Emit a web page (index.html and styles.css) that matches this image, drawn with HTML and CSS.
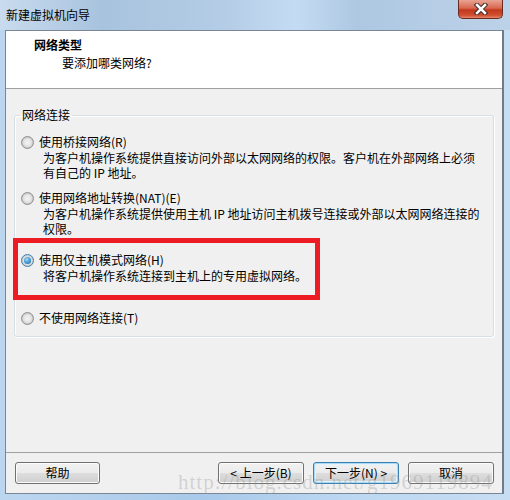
FILE: index.html
```html
<!DOCTYPE html>
<html lang="zh">
<head>
<meta charset="utf-8">
<title>新建虚拟机向导</title>
<link rel="stylesheet" href="styles.css">
</head>
<body>
<div class="window">
  <div class="titlebar">
    <span class="title">新建虚拟机向导</span>
    <div class="close">
      <svg width="20" height="12" viewBox="0 0 20 12">
        <path d="M6 2 L14 10 M14 2 L6 10" stroke="#3a2a2a" stroke-width="4.5" stroke-linecap="square"/>
        <path d="M6 2 L14 10 M14 2 L6 10" stroke="#ffffff" stroke-width="2.5" stroke-linecap="square"/>
      </svg>
    </div>
  </div>
  <div class="client">
    <div class="header">
      <div class="h-title">网络类型</div>
      <div class="h-sub">要添加哪类网络?</div>
    </div>
    <div class="body">
      <fieldset class="group">
        <legend>网络连接</legend>
        <div class="opt opt1">
          <div class="opt-title"><span class="radio"></span><span>使用桥接网络(R)</span></div>
          <div class="desc">为客户机操作系统提供直接访问外部以太网网络的权限。客户机在外部网络上必须<br>有自己的 IP 地址。</div>
        </div>
        <div class="opt opt2">
          <div class="opt-title"><span class="radio"></span><span>使用网络地址转换(NAT)(E)</span></div>
          <div class="desc">为客户机操作系统提供使用主机 IP 地址访问主机拨号连接或外部以太网网络连接的<br>权限。</div>
        </div>
        <div class="opt opt3">
          <div class="opt-title"><span class="radio checked"></span><span>使用仅主机模式网络(H)</span></div>
          <div class="desc">将客户机操作系统连接到主机上的专用虚拟网络。</div>
        </div>
        <div class="opt opt4">
          <div class="opt-title"><span class="radio"></span><span>不使用网络连接(T)</span></div>
        </div>
      </fieldset>
    </div>
    <div class="footer">
      <button class="btn help">帮助</button>
      <div class="spacer"></div>
      <button class="btn">&lt; 上一步(B)</button>
      <button class="btn default">下一步(N) &gt;</button>
      <button class="btn">取消</button>
    </div>
  </div>
  <div class="watermark">http://blog.csdn.net/g1969119894</div>
</div>
</body>
</html>
```
FILE: styles.css
```css
html, body {
  margin: 0;
  padding: 0;
}
body {
  width: 510px;
  height: 500px;
  overflow: hidden;
  font-family: "Noto Sans CJK SC", "Liberation Sans", sans-serif;
  font-size: 12px;
  color: #000;
}
.window {
  position: relative;
  width: 510px;
  height: 500px;
  background: linear-gradient(90deg, #bcd6ef 0%, #a9c9ea 40%, #bcd8f2 70%, #c7ddf2 100%);
  overflow: hidden;
}
.titlebar {
  height: 30px;
  display: flex;
  align-items: flex-start;
  background: linear-gradient(90deg, #c9dbee 0%, #a8c3de 20%, #b5cde6 45%, #c4dcf3 58%, #aec8e2 70%, #bcd2e8 100%);
}
.title {
  margin-left: 6px;
  line-height: 30px;
  color: #000;
}
.close {
  margin-left: auto;
  margin-right: 7px;
  width: 45px;
  height: 19px;
  box-sizing: border-box;
  border: 1px solid #6b2a22;
  border-top: none;
  border-radius: 0 0 5px 5px;
  background: linear-gradient(180deg, #e8a493 0%, #d9674f 45%, #c2381c 55%, #d0502f 85%, #e48a6e 100%);
  display: flex;
  align-items: center;
  justify-content: center;
}
.client {
  margin-left: 5px;
  width: 499px;
  box-sizing: border-box;
  height: 464px;
  border: 1px solid #7a8694;
  border-right: 2px solid #6f7b88;
  background: #f0f0f0;
  display: flex;
  flex-direction: column;
}
.header {
  height: 51px;
  background: #fff;
  border-bottom: 1px solid #a0a0a0;
  padding-top: 6px;
  box-sizing: content-box;
}
.header, .body { flex: none; }
.h-title {
  padding-left: 28px;
  font-weight: bold;
  line-height: 16px;
}
.h-sub {
  padding-left: 56px;
  margin-top: 2px;
  line-height: 16px;
}
.body {
  height: 364px;
  box-sizing: border-box;
  padding-top: 18px;
  border-bottom: 1px solid #a0a0a0;
}
.group {
  margin: 0 0 0 8px;
  width: 480px;
  box-sizing: border-box;
  min-width: 0;
  padding: 0 0 10px 0;
  border: 1px solid #d5dfe5;
  border-radius: 3px;
  box-shadow: inset 1px 1px 0 #fff, 1px 1px 0 #fff;
}
.group legend {
  margin-left: 5px;
  padding: 0 2px;
  line-height: 16px;
}
.opt {
  padding-left: 6px;
}
.opt1 { margin-top: 11px; }
.opt2 { margin-top: 10px; }
.opt3 { margin-top: 16px; position: relative; }
.opt4 { margin-top: 27px; }
.opt3::before {
  content: "";
  position: absolute;
  left: -2px;
  top: -14px;
  width: 307px;
  height: 62px;
  box-sizing: border-box;
  border: 5px solid #ed1c24;
}
.opt-title {
  display: flex;
  align-items: center;
  gap: 5px;
  line-height: 16px;
  height: 16px;
}
.desc {
  padding-left: 22px;
  line-height: 15px;
}
.radio {
  width: 13px;
  height: 13px;
  box-sizing: border-box;
  border-radius: 50%;
  border: 1px solid #8f8f8f;
  background: radial-gradient(circle at 50% 50%, #f4f4f4 0%, #e6e6e6 45%, #c9c9c9 70%, #f6f6f6 100%);
  position: relative;
  flex: none;
}
.radio.checked {
  border-color: #3c7fb1;
}
.radio.checked::after {
  content: "";
  position: absolute;
  left: 2px;
  top: 2px;
  width: 7px;
  height: 7px;
  border-radius: 50%;
  background: radial-gradient(circle at 40% 35%, #a8dcf7 0%, #4aa0d8 45%, #1a5f9c 100%);
}
.footer {
  flex: 1;
  display: flex;
  align-items: flex-start;
  padding: 9px 8px 0 9px;
  gap: 9px;
}
.spacer { flex: 1; }
.btn {
  width: 86px;
  height: 22px;
  box-sizing: border-box;
  border: 1px solid #707070;
  border-radius: 3px;
  font-family: "Noto Sans CJK SC", "Liberation Sans", sans-serif;
  font-size: 12px;
  line-height: 18px;
  padding: 0;
  color: #000;
  background: linear-gradient(180deg, #f2f2f2 0%, #ebebeb 48%, #dddddd 52%, #cfcfcf 100%);
  box-shadow: inset 0 0 0 1px #fcfcfc;
}
.btn.help { width: 85px; }
.btn.default {
  border-color: #3c7fb1;
  box-shadow: inset 0 0 0 1px #a9dbf6, inset 0 0 0 2px #e2f3fc;
}
.watermark {
  position: absolute;
  left: 178px;
  top: 470px;
  font-family: "Liberation Serif", serif;
  font-size: 21px;
  letter-spacing: 1px;
  color: rgba(150, 150, 150, 0.35);
  line-height: 24px;
  white-space: nowrap;
  pointer-events: none;
}
```
